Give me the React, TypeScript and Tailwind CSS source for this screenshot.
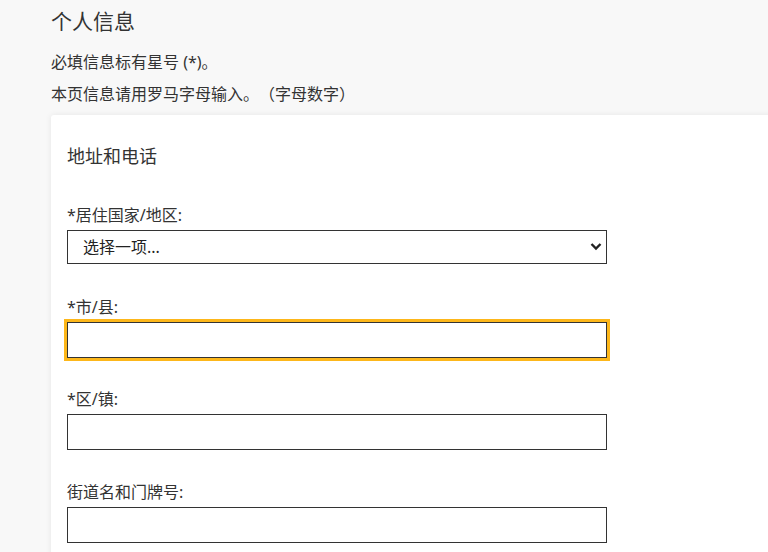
import { useState } from "react";

const fields = [
  { id: "city", label: "*市/县:", focused: true, gap: "mt-[32px]" },
  { id: "district", label: "*区/镇:", gap: "mt-[30px]" },
  { id: "street", label: "街道名和门牌号:", gap: "mt-[31px]" },
];

export default function App() {
  const [values, setValues] = useState<Record<string, string>>({});

  return (
    <main className="w-screen h-[552px] overflow-hidden bg-[#f8f8f8] text-[#333] [text-spacing-trim:space-all] font-['Noto_Sans','Noto_Sans_CJK_SC',sans-serif]">
      <div className="pl-[51px] pt-[7px]">
        <h1 className="text-[21px] leading-[28px] font-normal">个人信息</h1>
        <p className="mt-[15px] text-[16px] leading-[24px]">必填信息标有星号 (*)。</p>
        <p className="mt-[8px] text-[16px] leading-[24px]">本页信息请用罗马字母输入。（字母数字）</p>

        <section className="mt-[9px] w-[760px] rounded-[3px] bg-white pl-4 pt-[28px] pb-10 shadow-[0_0_6px_rgba(0,0,0,0.08)]">
          <h2 className="text-[18px] leading-[26px] font-normal">地址和电话</h2>

          <div className="mt-[35px]">
            <label className="block text-[16px] leading-[22px]">*居住国家/地区:</label>
            <div className="relative mt-1 w-[540px]">
              <select className="block h-[34px] w-full appearance-none border border-[#333] bg-white pl-[15px] text-[16px] text-[#222] rounded-none outline-none">
                <option>选择一项...</option>
              </select>
              <svg
                className="pointer-events-none absolute right-[5px] top-[12px]"
                width="12"
                height="9"
                viewBox="0 0 12 9"
              >
                <path d="M1.5 2 L6 6.5 L10.5 2" fill="none" stroke="#222" strokeWidth="2.4" />
              </svg>
            </div>
          </div>

          {fields.map((f) => (
            <div key={f.id} className={f.gap}>
              <label className="block text-[16px] leading-[22px]">{f.label}</label>
              <input
                value={values[f.id] || ""}
                onChange={(e) => setValues({ ...values, [f.id]: e.target.value })}
                className={`mt-1 block h-[36px] w-[540px] border border-[#333] bg-white px-2 text-[16px] rounded-none ${
                  f.focused ? "outline-[3px] outline-solid outline-[#fdb71a]" : "outline-none"
                }`}
              />
            </div>
          ))}
        </section>
      </div>
    </main>
  );
}
